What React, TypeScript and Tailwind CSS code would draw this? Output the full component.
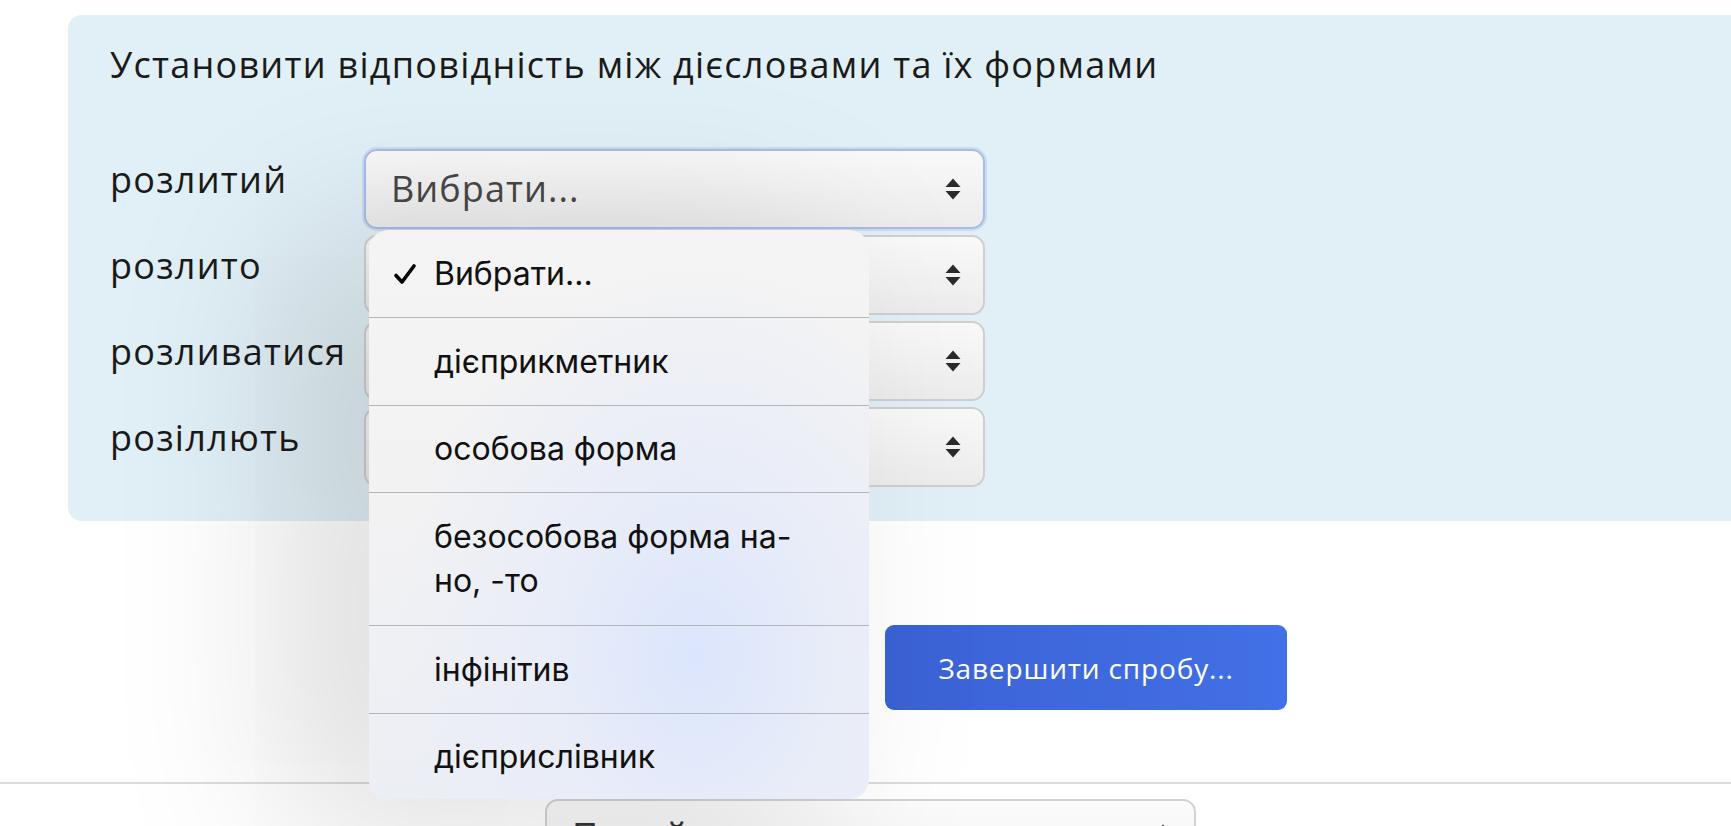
import React from "react";

const pageFont = { fontFamily: '"Open Sans", "DejaVu Sans", sans-serif' };

function Arrows() {
  return (
    <svg width="18" height="24" viewBox="0 0 18 24" className="shrink-0">
      <path d="M9 1.5 L16.5 10 L1.5 10 Z" fill="#2b2b2b" />
      <path d="M9 22.5 L16.5 14 L1.5 14 Z" fill="#2b2b2b" />
    </svg>
  );
}

function Select({ focused }: { focused?: boolean }) {
  return (
    <div
      className={
        "h-[80px] w-[621px] rounded-[13px] border-2 flex items-center justify-between pl-[25px] pr-[21px] bg-gradient-to-b from-[#f9f9f9] to-[#ececec] " +
        (focused
          ? "border-[#a9bbe6] shadow-[0_0_0_2px_rgba(160,185,235,0.35)]"
          : "border-[#cfcfcf]")
      }
    >
      <span className="text-[36px] text-[#474747] tracking-[0.03em]">Вибрати...</span>
      <Arrows />
    </div>
  );
}

const rows = ["розлитий", "розлито", "розливатися", "розіллють"];

const options = [
  { label: "Вибрати...", checked: true, h: "h-[87px]" },
  { label: "дієприкметник", h: "h-[88px]" },
  { label: "особова форма", h: "h-[87px]" },
  { label: "безособова форма на-\nно, -то", h: "h-[133px]" },
  { label: "інфінітив", h: "h-[88px]" },
  { label: "дієприслівник", h: "h-[86px]" },
];

export default function App() {
  return (
    <div
      className="relative w-[1731px] h-[826px] overflow-hidden bg-white text-[#1a1a1a]"
      style={pageFont}
    >
      {/* question panel */}
      <div className="mt-[15px] ml-[68px] h-[506px] rounded-l-[14px] bg-[#e1eff6] pl-[42px] pt-[24px]">
        <h2 className="text-[36px] leading-[52px] tracking-[0.035em] font-normal">
          Установити відповідність між дієсловами та їх формами
        </h2>
        <div className="mt-[58px] grid grid-cols-[254px_621px] gap-y-[6px]">
          {rows.map((r, i) => (
            <React.Fragment key={r}>
              <div className="pt-[6px] text-[36px] leading-[50px] tracking-[0.035em]">{r}</div>
              <Select focused={i === 0} />
            </React.Fragment>
          ))}
        </div>
      </div>

      <div className="mt-[104px] ml-[885px]">
        <button className="w-[402px] h-[85px] rounded-[9px] bg-gradient-to-r from-[#3b62d5] to-[#4270e6] text-white text-[28px] tracking-[0.03em]">
          Завершити спробу...
        </button>
      </div>

      <div className="mt-[72px] border-t-2 border-[#dcdcdc]" />

      <div className="mt-[15px] ml-[545px] w-[651px] h-[80px] rounded-[13px] border-2 border-[#d2d2d2] bg-gradient-to-b from-[#fcfcfc] to-[#f1f1f1] flex items-start justify-between pl-[25px] pr-[22px] pt-[10px]">
        <span className="text-[36px] leading-[50px] text-[#333] tracking-[0.03em]">Перейти до...</span>
        <div className="pt-[12px]">
          <Arrows />
        </div>
      </div>

      {/* open native picker */}
      <div
        className="absolute left-[369px] top-[230px] w-[500px] h-[569px] rounded-[20px] overflow-hidden shadow-[-70px_20px_170px_20px_rgba(0,0,0,0.13)] bg-[radial-gradient(ellipse_at_65%_75%,#dbe5fc_0%,#e9edf8_32%,rgba(243,243,244,0)_65%),linear-gradient(to_bottom,#f4f4f4_0%,#f2f2f3_50%,#eceef5_100%)]"
        style={{ fontFamily: 'Inter, "Noto Sans", sans-serif' }}
      >
        {options.map((o, i) => (
          <div
            key={i}
            className={
              o.h +
              " flex items-center pl-[24px] text-[32px] leading-[44px] text-[#111] " +
              (i > 0 ? "border-t border-[#b3b6bd]" : "")
            }
          >
            <div className="w-[41px] shrink-0">
              {o.checked && (
                <svg width="24" height="22" viewBox="0 0 24 22">
                  <path
                    d="M3 12.5 L9 19 L21 3"
                    fill="none"
                    stroke="#000"
                    strokeWidth="3.6"
                    strokeLinecap="round"
                    strokeLinejoin="round"
                  />
                </svg>
              )}
            </div>
            <span className="whitespace-pre-line">{o.label}</span>
          </div>
        ))}
      </div>
    </div>
  );
}
